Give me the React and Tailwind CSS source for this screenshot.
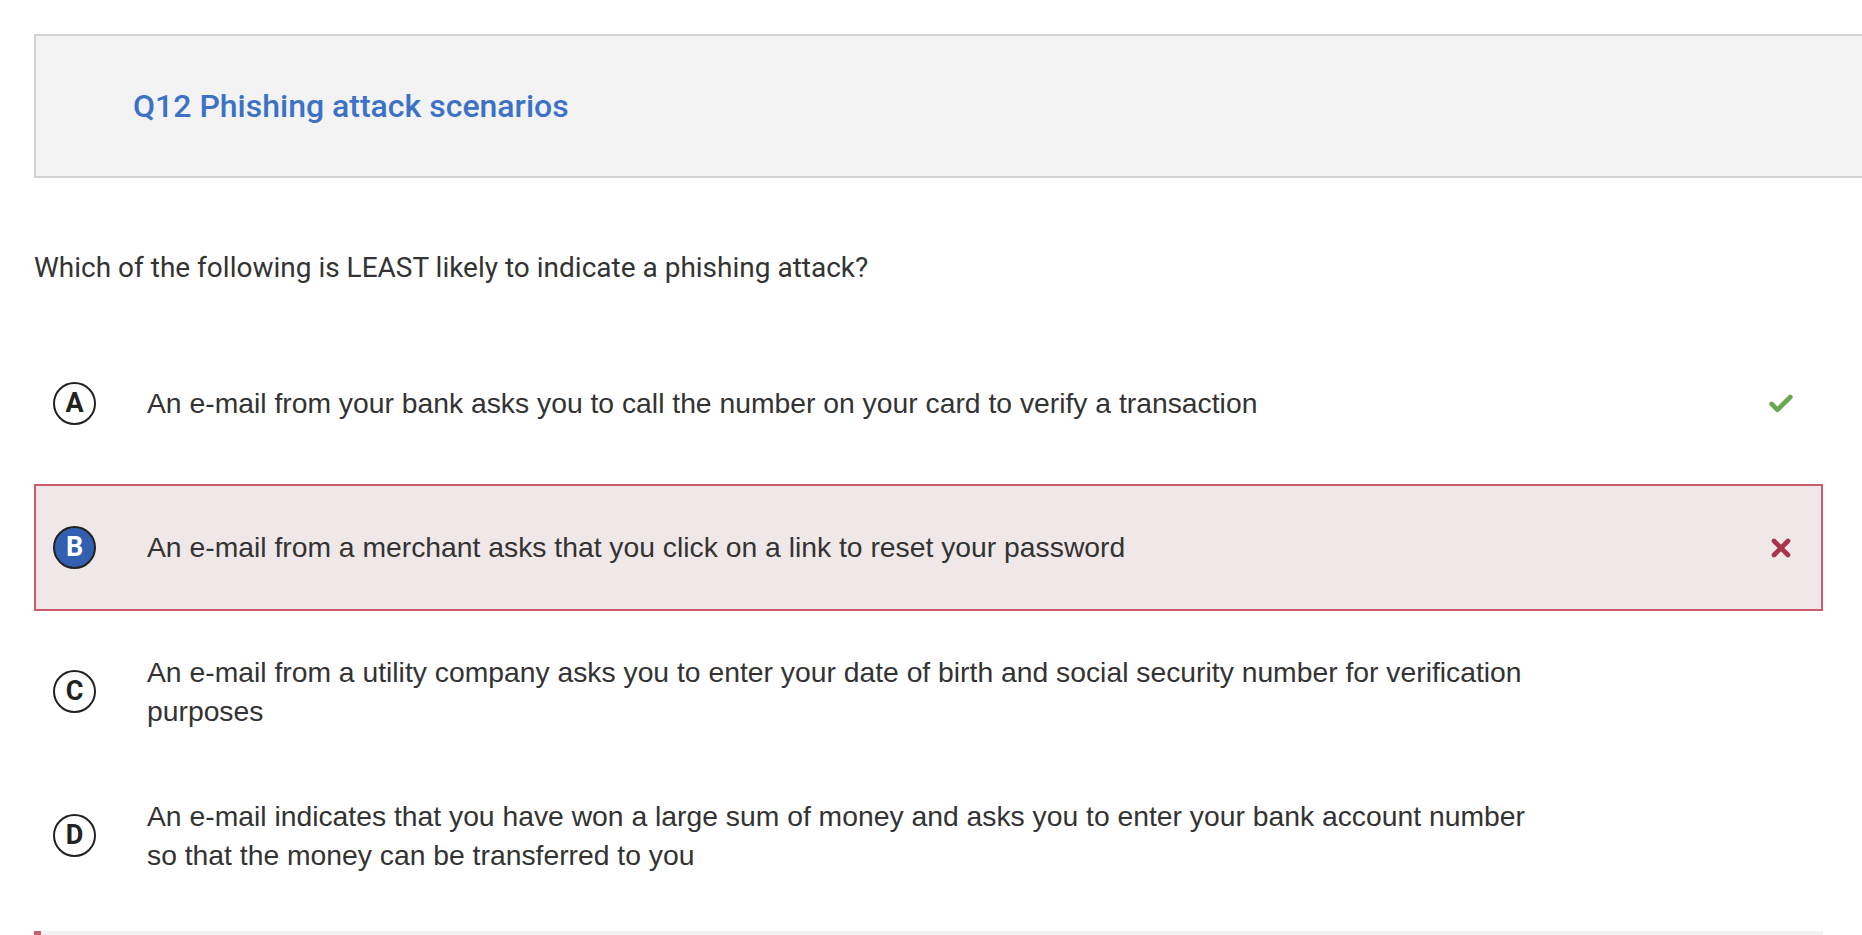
import { Check, X } from "lucide-react";

const options = [
  { key: "A", text: "An e-mail from your bank asks you to call the number on your card to verify a transaction", mark: "right" },
  { key: "B", text: "An e-mail from a merchant asks that you click on a link to reset your password", mark: "wrong", picked: true },
  { key: "C", text: "An e-mail from a utility company asks you to enter your date of birth and social security number for verification purposes" },
  { key: "D", text: "An e-mail indicates that you have won a large sum of money and asks you to enter your bank account number so that the money can be transferred to you" },
];

function Letter({ k, picked }) {
  return (
    <div
      className={`w-[43px] h-[43px] shrink-0 rounded-full border-2 border-[#222] flex items-center justify-center text-[27px] font-bold ${
        picked ? "bg-[#335fb0] text-white" : "bg-white text-[#222]"
      }`}
    >
      {k}
    </div>
  );
}

export default function App() {
  return (
    <div className="min-h-screen bg-white pl-[34px] pt-[34px] font-['Roboto',sans-serif] text-[#333]">
      {/* header */}
      <div className="h-[144px] bg-[#f3f3f3] border-2 border-r-0 border-[#d2d2d6] flex items-center pl-[97px]">
        <h1 className="text-[32px] font-medium text-[#3c72c6]">Q12 Phishing attack scenarios</h1>
      </div>

      <p className="mt-[72px] text-[28px] leading-[36px]">Which of the following is LEAST likely to indicate a phishing attack?</p>

      <div className="mt-[54px] w-[1789px] flex flex-col gap-[17px]">
        {options.map((o) => (
          <div
            key={o.key}
            className={`h-[127px] border-2 flex items-center pl-[17px] pr-[26px] ${
              o.picked ? "border-[#cc5c6c] bg-[#f0e8e8]" : "border-transparent"
            }`}
          >
            <Letter k={o.key} picked={o.picked} />
            <div className="ml-[51px] w-[1395px] text-[28.3px] leading-[39px] font-['Liberation_Sans',Arial,sans-serif] text-[#333]">
              {o.text}
            </div>
            <div className="ml-auto w-[28px] flex justify-center">
              {o.mark === "right" && <Check size={28} strokeWidth={4} className="text-[#6aa84f]" />}
              {o.mark === "wrong" && <X size={28} strokeWidth={4} className="text-[#a8334a]" />}
            </div>
          </div>
        ))}
      </div>

      <div className="mt-[32px] w-[1789px] h-[6px] bg-[#f2f2f2] flex">
        <div className="w-[7px] h-full bg-[#cc5c6c]" />
      </div>
    </div>
  );
}
